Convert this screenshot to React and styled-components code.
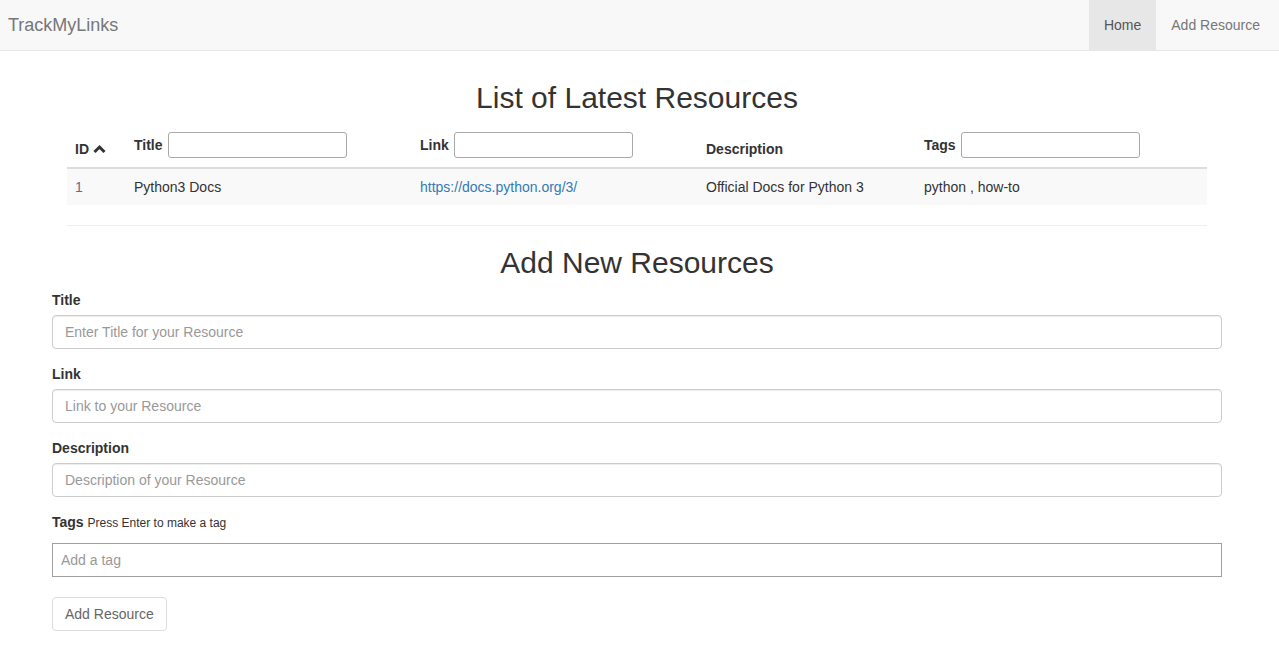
import React from 'react';
import styled, { createGlobalStyle } from 'styled-components';

const GlobalStyle = createGlobalStyle`
  * { box-sizing: border-box; }
  body {
    margin: 0;
    font-family: "Liberation Sans", Arial, sans-serif;
    font-size: 14px;
    line-height: 20px;
    color: #333;
    background: #fff;
  }
`;

const Navbar = styled.nav`
  display: flex;
  justify-content: space-between;
  align-items: stretch;
  height: 51px;
  background: #f8f8f8;
  border-bottom: 1px solid #e7e7e7;
  padding: 0 4px 0 8px;
`;

const Brand = styled.a`
  display: flex;
  align-items: center;
  font-size: 18px;
  color: #777;
  text-decoration: none;
`;

const NavList = styled.ul`
  display: flex;
  list-style: none;
  margin: 0;
  padding: 0;
`;

const NavItem = styled.li`
  display: flex;
  align-items: center;
  padding: 0 15px;
  color: ${(p) => (p.$active ? '#555' : '#777')};
  background: ${(p) => (p.$active ? '#e7e7e7' : 'transparent')};
`;

const Page = styled.div`
  padding-right: 5px;
`;

const Container = styled.div`
  width: 1170px;
  margin: 0 auto;
`;

const Heading = styled.h2`
  font-size: 30px;
  font-weight: 500;
  line-height: 33px;
  text-align: center;
  margin: ${(p) => p.$margin};
`;

const TableWrap = styled.div`
  margin: 0 15px;
`;

const Grid = styled.div`
  display: grid;
  grid-template-columns: 59px 286px 286px 218px 291px;
  align-items: end;
`;

const HeadRow = styled(Grid)`
  border-bottom: 2px solid #ddd;
`;

const BodyRow = styled(Grid)`
  background: #f9f9f9;
`;

const Th = styled.div`
  display: flex;
  align-items: center;
  gap: ${(p) => (p.$withInput ? '5px' : '4px')};
  padding: ${(p) => (p.$withInput ? '9px 8px' : '8px')};
  font-weight: bold;
`;

const Td = styled.div`
  padding: 8px;
  color: ${(p) => p.$color || '#333'};
`;

const LinkText = styled.a`
  color: #337ab7;
  text-decoration: none;
`;

const FilterInput = styled.input`
  width: 179px;
  height: 26px;
  border: 1px solid #a9a9a9;
  border-radius: 3px;
  background: #fff;
  font: inherit;
  font-weight: normal;
`;

const Rule = styled.hr`
  border: 0;
  border-top: 1px solid #eee;
  margin: 20px 15px;
`;

const FormGroup = styled.div`
  margin-bottom: ${(p) => p.$mb || '15px'};
`;

const Label = styled.label`
  display: block;
  font-weight: bold;
  margin-bottom: ${(p) => p.$mb || '5px'};
`;

const Hint = styled.small`
  font-size: 12px;
  font-weight: normal;
`;

const TextInput = styled.input`
  display: block;
  width: 100%;
  height: 34px;
  padding: 6px 12px;
  font: inherit;
  color: #555;
  border: 1px solid #ccc;
  border-radius: 4px;
  box-shadow: inset 0 1px 1px rgba(0, 0, 0, 0.075);
  &::placeholder { color: #999; }
`;

const TagInput = styled(TextInput)`
  padding: 6px 8px;
  border-color: #a0a0a0;
  border-radius: 0;
  box-shadow: none;
`;

const Button = styled.button`
  height: 34px;
  padding: 6px 12px;
  font: inherit;
  color: #666;
  background: #fff;
  border: 1px solid #ddd;
  border-radius: 4px;
`;

const Chevron = () => (
  <svg width="13" height="10" viewBox="0 0 13 10">
    <path d="M1.5 8 L6.5 3 L11.5 8" fill="none" stroke="#333" strokeWidth="3" />
  </svg>
);

export default function App() {
  return (
    <>
      <GlobalStyle />
      <Navbar>
        <Brand href="#">TrackMyLinks</Brand>
        <NavList>
          <NavItem $active>Home</NavItem>
          <NavItem>Add Resource</NavItem>
        </NavList>
      </Navbar>
      <Page>
        <Container>
          <Heading $margin="30px 0 9px">List of Latest Resources</Heading>
          <TableWrap>
            <HeadRow>
              <Th>ID <Chevron /></Th>
              <Th $withInput>Title <FilterInput /></Th>
              <Th $withInput>Link <FilterInput /></Th>
              <Th>Description</Th>
              <Th $withInput>Tags <FilterInput /></Th>
            </HeadRow>
            <BodyRow>
              <Td $color="#5b6f85">1</Td>
              <Td>Python3 Docs</Td>
              <Td><LinkText href="#">https://docs.python.org/3/</LinkText></Td>
              <Td>Official Docs for Python 3</Td>
              <Td>python , how-to</Td>
            </BodyRow>
          </TableWrap>
          <Rule />
          <Heading $margin="0 0 11px">Add New Resources</Heading>
          <form>
            <FormGroup>
              <Label>Title</Label>
              <TextInput placeholder="Enter Title for your Resource" />
            </FormGroup>
            <FormGroup>
              <Label>Link</Label>
              <TextInput placeholder="Link to your Resource" />
            </FormGroup>
            <FormGroup>
              <Label>Description</Label>
              <TextInput placeholder="Description of your Resource" />
            </FormGroup>
            <FormGroup $mb="20px">
              <Label $mb="10px">Tags <Hint>Press Enter to make a tag</Hint></Label>
              <TagInput placeholder="Add a tag" />
            </FormGroup>
            <Button type="button">Add Resource</Button>
          </form>
        </Container>
      </Page>
    </>
  );
}
